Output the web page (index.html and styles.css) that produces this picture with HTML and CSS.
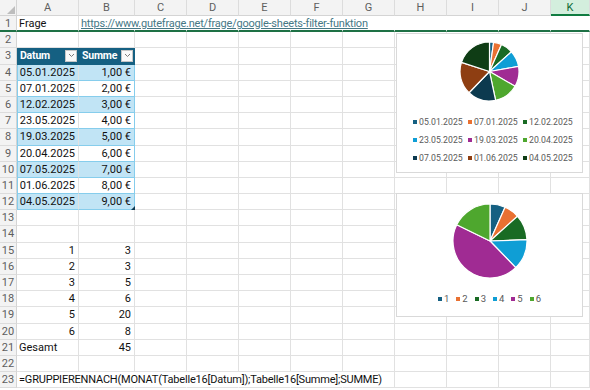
FILE: index.html
```html
<!DOCTYPE html>
<html lang="de">
<head>
    <meta charset="UTF-8">
    <title>Mappe1</title>
    <link rel="stylesheet" href="styles.css">
</head>
<body>
    <div class="sheet" id="sheet">
        <div class="chart chart-dates">
            <svg class="pie" id="pie-dates" width="61" height="61" viewBox="0 0 61 61"></svg>
            <div class="legend legend-dates" id="legend-dates"></div>
        </div>
        <div class="chart chart-months">
            <svg class="pie" id="pie-months" width="76" height="76" viewBox="0 0 76 76"></svg>
            <div class="legend legend-months" id="legend-months"></div>
        </div>
    </div>

    <script>
        const columns = ['A', 'B', 'C', 'D', 'E', 'F', 'G', 'H', 'I', 'J', 'K'];
        const dates = ['05.01.2025', '07.01.2025', '12.02.2025', '23.05.2025', '19.03.2025',
                       '20.04.2025', '07.05.2025', '01.06.2025', '04.05.2025'];
        const sums = [1, 2, 3, 4, 5, 6, 7, 8, 9];
        const months = [3, 3, 5, 6, 20, 8];
        const colors = ['#156082', '#e97132', '#196b24', '#0f9ed5', '#a02b93',
                        '#4ea72e', '#0c3a4f', '#8e3e12', '#0f3d15'];

        const sheet = document.getElementById('sheet');
        const chevron = '<span class="filter"><svg width="7" height="5" viewBox="0 0 7 5"><polyline points="1,1 3.5,3.5 6,1" fill="none" stroke="#7a7a7a" stroke-width="1"/></svg></span>';

        function addCell(html, cls) {
            const div = document.createElement('div');
            div.className = 'cell' + (cls ? ' ' + cls : '');
            div.innerHTML = html;
            sheet.appendChild(div);
        }

        // what goes into columns A and B of each row
        function content(n) {
            if (n === 1) return [['Frage', ''], ['https://www.gutefrage.net/frage/google-sheets-filter-funktion', 'link']];
            if (n === 3) return [['<span>Datum</span>' + chevron, 'th'], ['<span>Summe</span>' + chevron, 'th']];
            if (n >= 4 && n <= 12) {
                const band = n % 2 === 0 ? ' band' : '';
                const sum = sums[n - 4].toFixed(2).replace('.', ',') + ' €';
                return [[dates[n - 4], 'tb first num' + band],
                        [sum, 'tb last num' + band + (n === 12 ? ' handle' : '')]];
            }
            if (n >= 15 && n <= 20) return [[String(n - 14), 'num'], [String(months[n - 15]), 'num']];
            if (n === 21) return [['Gesamt', ''], ['45', 'num']];
            if (n === 23) return [['=GRUPPIERENNACH(MONAT(Tabelle16[Datum]);Tabelle16[Summe];SUMME)', 'formula'], ['', '']];
            return [['', ''], ['', '']];
        }

        addCell('<svg width="8" height="8" viewBox="0 0 8 8"><polygon points="8,0 8,8 0,8" fill="#bdbdbd"/></svg>', 'corner');
        columns.forEach(c => addCell(c, 'col-head' + (c === 'K' ? ' selected' : '')));

        for (let n = 1; n <= 23; n++) {
            const frozen = n === 1 ? ' frozen' : '';
            addCell(String(n), 'row-head' + frozen);
            const ab = content(n);
            columns.forEach((c, i) => {
                let cls = '';
                let html = '';
                if (i < 2) {
                    html = ab[i][0];
                    cls = ab[i][1];
                }
                if (n === 1 && i >= 1) cls += ' spill';
                if (n === 23 && i <= 5) cls += ' spill';
                addCell(html, (cls + frozen).trim());
            });
        }

        function drawPie(id, values, r) {
            const svg = document.getElementById(id);
            const total = values.reduce((s, v) => s + v, 0);
            const c = r + 1;
            let start = 0;
            let out = '';
            values.forEach((v, i) => {
                const end = start + v / total * 2 * Math.PI;
                const x1 = c + r * Math.sin(start), y1 = c - r * Math.cos(start);
                const x2 = c + r * Math.sin(end), y2 = c - r * Math.cos(end);
                const large = end - start > Math.PI ? 1 : 0;
                out += `<path d="M${c},${c} L${x1.toFixed(2)},${y1.toFixed(2)} A${r},${r} 0 ${large} 1 ${x2.toFixed(2)},${y2.toFixed(2)} Z" fill="${colors[i]}" stroke="#fff" stroke-width="1.2" stroke-linejoin="round"/>`;
                start = end;
            });
            svg.innerHTML = out;
        }

        function drawLegend(id, labels) {
            document.getElementById(id).innerHTML = labels
                .map((l, i) => `<span class="key"><i style="background:${colors[i]}"></i>${l}</span>`)
                .join('');
        }

        drawPie('pie-dates', sums, 29.5);
        drawPie('pie-months', months, 37);
        drawLegend('legend-dates', dates);
        drawLegend('legend-months', ['1', '2', '3', '4', '5', '6']);
    </script>
</body>
</html>
```

FILE: styles.css
```css
html, body {
    margin: 0;
    overflow: hidden;
    background: #fff;
    font-family: Roboto, "Liberation Sans", sans-serif;
}
.sheet {
    position: relative;
    display: grid;
    grid-template-columns: 17px 62px 56px repeat(8, 52px) 39px;
    grid-template-rows: 16px repeat(23, 16.2px);
    width: 590px;
    height: 390px;
    overflow: hidden;
}
.cell {
    box-sizing: border-box;
    min-width: 0;
    padding: 0 2px;
    border-right: 1px solid #e1e1e1;
    border-bottom: 1px solid #e1e1e1;
    font-size: 11px;
    line-height: 15px;
    color: #111;
    white-space: nowrap;
}
.corner {
    display: flex;
    align-items: flex-end;
    justify-content: flex-end;
    padding: 0 1px 1px 0;
    background: #f3f3f3;
    border-right-color: #d4d4d4;
    border-bottom-color: #d4d4d4;
}
.col-head {
    background: #f3f3f3;
    color: #5e5e5e;
    text-align: center;
    border-right-color: #dcdcdc;
    border-bottom-color: #d4d4d4;
}
.col-head.selected {
    background: #d3eedd;
    color: #0f6a36;
    border-bottom: 2px solid #107c41;
}
.row-head {
    background: #f3f3f3;
    color: #5e5e5e;
    text-align: center;
    padding: 0;
    border-right-color: #d4d4d4;
    border-bottom-color: #dcdcdc;
}
.frozen {
    border-bottom: 2px solid #1e7145;
}
.spill {
    border-right-color: transparent;
}
.link {
    color: #467886;
    text-decoration: underline;
    letter-spacing: -0.22px;
}
.formula {
    letter-spacing: -0.2px;
}
.num {
    text-align: right;
    padding-right: 3px;
}
.th {
    display: flex;
    align-items: center;
    justify-content: space-between;
    padding: 0 1px 0 3px;
    background: #156082;
    color: #fff;
    font-size: 10.5px;
    font-weight: bold;
    letter-spacing: -0.2px;
    border-right-color: #156082;
    border-bottom-color: #156082;
}
.filter {
    display: flex;
    align-items: center;
    justify-content: center;
    box-sizing: border-box;
    flex: none;
    width: 12px;
    height: 12px;
    background: #fafafa;
    border: 1px solid #c6c6c6;
}
.tb {
    border-bottom-color: #86cdec;
}
.tb.first {
    box-shadow: inset 1px 0 #86cdec;
}
.tb.last {
    border-right-color: #86cdec;
}
.band {
    background: #c1e4f5;
}
.handle {
    position: relative;
}
.handle::after {
    content: '';
    position: absolute;
    right: -1px;
    bottom: -1px;
    border-left: 4px solid transparent;
    border-bottom: 4px solid #0e3a52;
}
.chart {
    position: absolute;
    left: 396px;
    z-index: 2;
    box-sizing: border-box;
    width: 187px;
    display: flex;
    flex-direction: column;
    align-items: center;
    background: #fff;
    border: 1px solid #d9d9d9;
}
.chart-dates {
    top: 33px;
    height: 140px;
    padding-top: 7px;
}
.chart-months {
    top: 193px;
    height: 124px;
    padding-top: 9px;
}
.legend-dates {
    display: grid;
    grid-template-columns: repeat(3, 50px);
    column-gap: 5px;
    align-self: flex-start;
    margin: 11px 0 0 16px;
}
.legend-months {
    display: flex;
    gap: 7px;
    margin-top: 13px;
}
.key {
    display: flex;
    align-items: center;
    gap: 2px;
    font-size: 8.7px;
    line-height: 18px;
    color: #595959;
    white-space: nowrap;
}
.legend-months .key {
    font-size: 9.5px;
    line-height: 14px;
}
.key i {
    width: 4px;
    height: 4px;
}
```
